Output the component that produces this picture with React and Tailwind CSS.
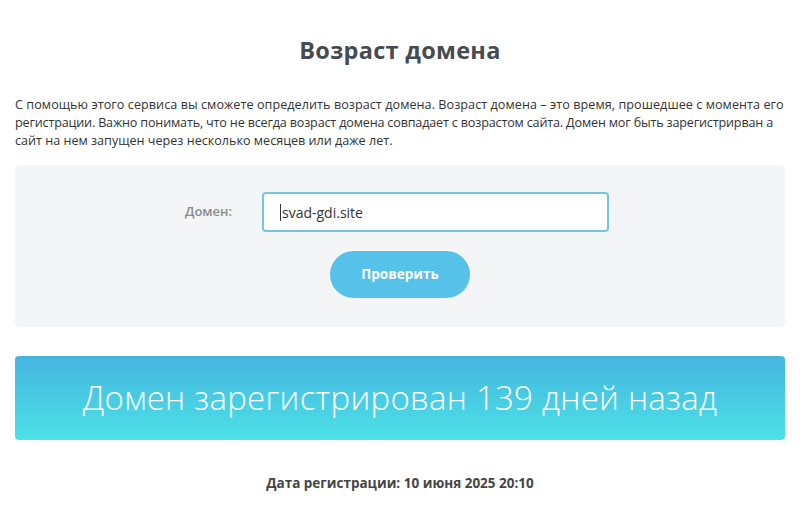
export default function App() {
  return (
    <div className="w-[800px] h-[513px] bg-white overflow-hidden" style={{ fontFamily: '"Open Sans", sans-serif' }}>
      <div className="px-[15px]">
        <h1 className="text-center text-[23.5px] font-bold text-[#464b51] pt-[34px] leading-[32px] tracking-[0.3px]">Возраст домена</h1>
        <p className="mt-[30px] text-[12.6px] leading-[18px] text-[#333] whitespace-nowrap">
          <span className="block tracking-[0.06px]">С помощью этого сервиса вы сможете определить возраст домена. Возраст домена – это время, прошедшее с момента его</span>
          <span className="block tracking-[-0.17px]">регистрации. Важно понимать, что не всегда возраст домена совпадает с возрастом сайта. Домен мог быть зарегистрирван а</span>
          <span className="block">сайт на нем запущен через несколько месяцев или даже лет.</span>
        </p>
        <div className="mt-[15px] h-[162px] bg-[#f4f5f6] rounded-[4px] flex flex-col items-center pt-[27px]">
          <div className="flex items-center">
            <label className="text-[13px] font-semibold text-[#8a8a8a] w-[77px] ml-[-6px] text-left">Домен:</label>
            <div className="w-[347px] h-[40px] bg-white border-2 border-[#74c6df] rounded-[4px] flex items-center pl-[16px] text-[14px] text-[#333]">
              <span className="w-[1px] h-[17px] bg-[#333] mr-[1px]"></span>svad-gdi.site
            </div>
          </div>
          <button className="mt-[19px] w-[140px] h-[47px] rounded-full bg-[#56c2ea] text-white text-[13.5px] font-bold">Проверить</button>
        </div>
        <div className="mt-[29px] h-[84px] rounded-[4px] bg-gradient-to-b from-[#45b5e0] to-[#4de1e6] flex items-center justify-center">
          <span className="text-white text-[33px] font-light tracking-[0.25px]">Домен зарегистрирован 139 дней назад</span>
        </div>
        <div className="mt-[33px] text-center text-[13.5px] font-bold text-[#454545]">Дата регистрации: 10 июня 2025 20:10</div>
      </div>
    </div>
  );
}
